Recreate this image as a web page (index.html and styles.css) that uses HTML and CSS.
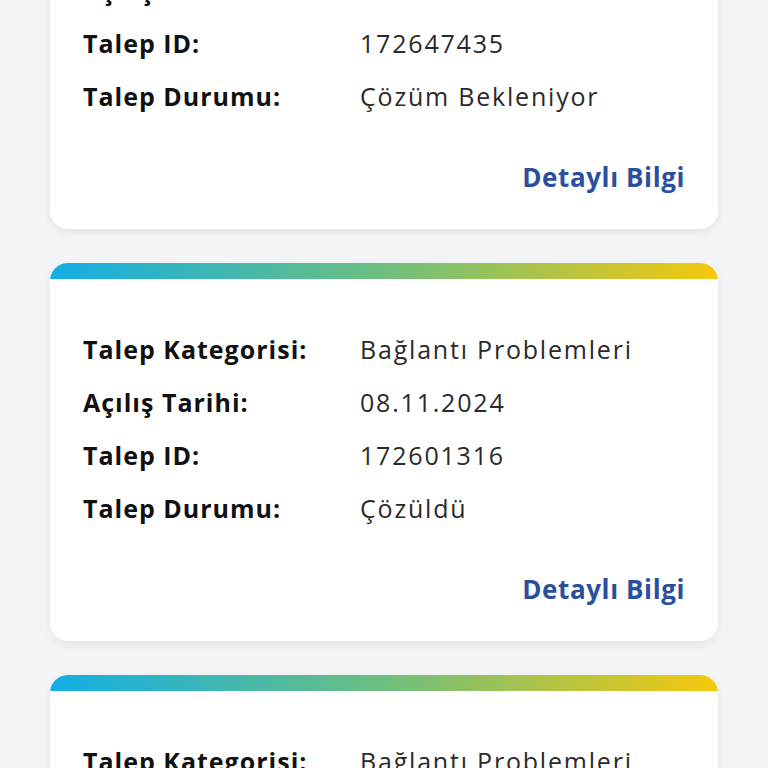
FILE: index.html
```html
<!DOCTYPE html>
<html lang="tr">
<head>
<meta charset="utf-8">
<link rel="stylesheet" href="styles.css">
</head>
<body>
<main class="list">
  <section class="card">
    <div class="bar"></div>
    <div class="body">
      <div class="row"><span class="label">Talep Kategorisi:</span><span class="value">Bağlantı Problemleri</span></div>
      <div class="row"><span class="label">Açılış Tarihi:</span><span class="value">09.11.2024</span></div>
      <div class="row"><span class="label">Talep ID:</span><span class="value">172647435</span></div>
      <div class="row"><span class="label">Talep Durumu:</span><span class="value">Çözüm Bekleniyor</span></div>
      <div class="more"><a class="link">Detaylı Bilgi</a></div>
    </div>
  </section>
  <section class="card">
    <div class="bar"></div>
    <div class="body">
      <div class="row"><span class="label">Talep Kategorisi:</span><span class="value">Bağlantı Problemleri</span></div>
      <div class="row"><span class="label">Açılış Tarihi:</span><span class="value">08.11.2024</span></div>
      <div class="row"><span class="label">Talep ID:</span><span class="value">172601316</span></div>
      <div class="row"><span class="label">Talep Durumu:</span><span class="value">Çözüldü</span></div>
      <div class="more"><a class="link">Detaylı Bilgi</a></div>
    </div>
  </section>
  <section class="card">
    <div class="bar"></div>
    <div class="body">
      <div class="row"><span class="label">Talep Kategorisi:</span><span class="value">Bağlantı Problemleri</span></div>
      <div class="row"><span class="label">Açılış Tarihi:</span><span class="value">07.11.2024</span></div>
      <div class="row"><span class="label">Talep ID:</span><span class="value">172590021</span></div>
      <div class="row"><span class="label">Talep Durumu:</span><span class="value">Çözüldü</span></div>
      <div class="more"><a class="link">Detaylı Bilgi</a></div>
    </div>
  </section>
</main>
</body>
</html>
```
FILE: styles.css
```css
html, body {
  margin: 0;
  padding: 0;
  background: #f3f4f6;
  height: 768px;
  overflow: hidden;
}
body {
  font-family: "Open Sans", "Lato", sans-serif;
}
.list {
  display: flex;
  flex-direction: column;
  gap: 34px;
  padding: 0 50px;
  margin-top: -149px;
}
.card {
  background: #ffffff;
  border-radius: 18px;
  overflow: hidden;
  box-shadow: 0 3px 8px rgba(0, 0, 0, 0.07);
}
.bar {
  height: 16px;
  background: linear-gradient(90deg, #12aee6 0%, #6dbf7f 50%, #f6c80c 100%);
}
.body {
  padding: 43px 33px 26px 33px;
}
.row {
  display: grid;
  grid-template-columns: 277px 1fr;
  height: 53px;
  align-items: center;
  font-size: 25px;
}
.label {
  font-weight: 700;
  color: #111111;
  letter-spacing: 1px;
}
.value {
  font-weight: 400;
  color: #2a2a2a;
  letter-spacing: 1.8px;
}
.more {
  display: flex;
  justify-content: flex-end;
  margin-top: 28px;
  height: 53px;
  align-items: center;
}
.link {
  font-size: 26px;
  font-weight: 700;
  color: #2b4f9e;
  letter-spacing: 0.6px;
}
```
